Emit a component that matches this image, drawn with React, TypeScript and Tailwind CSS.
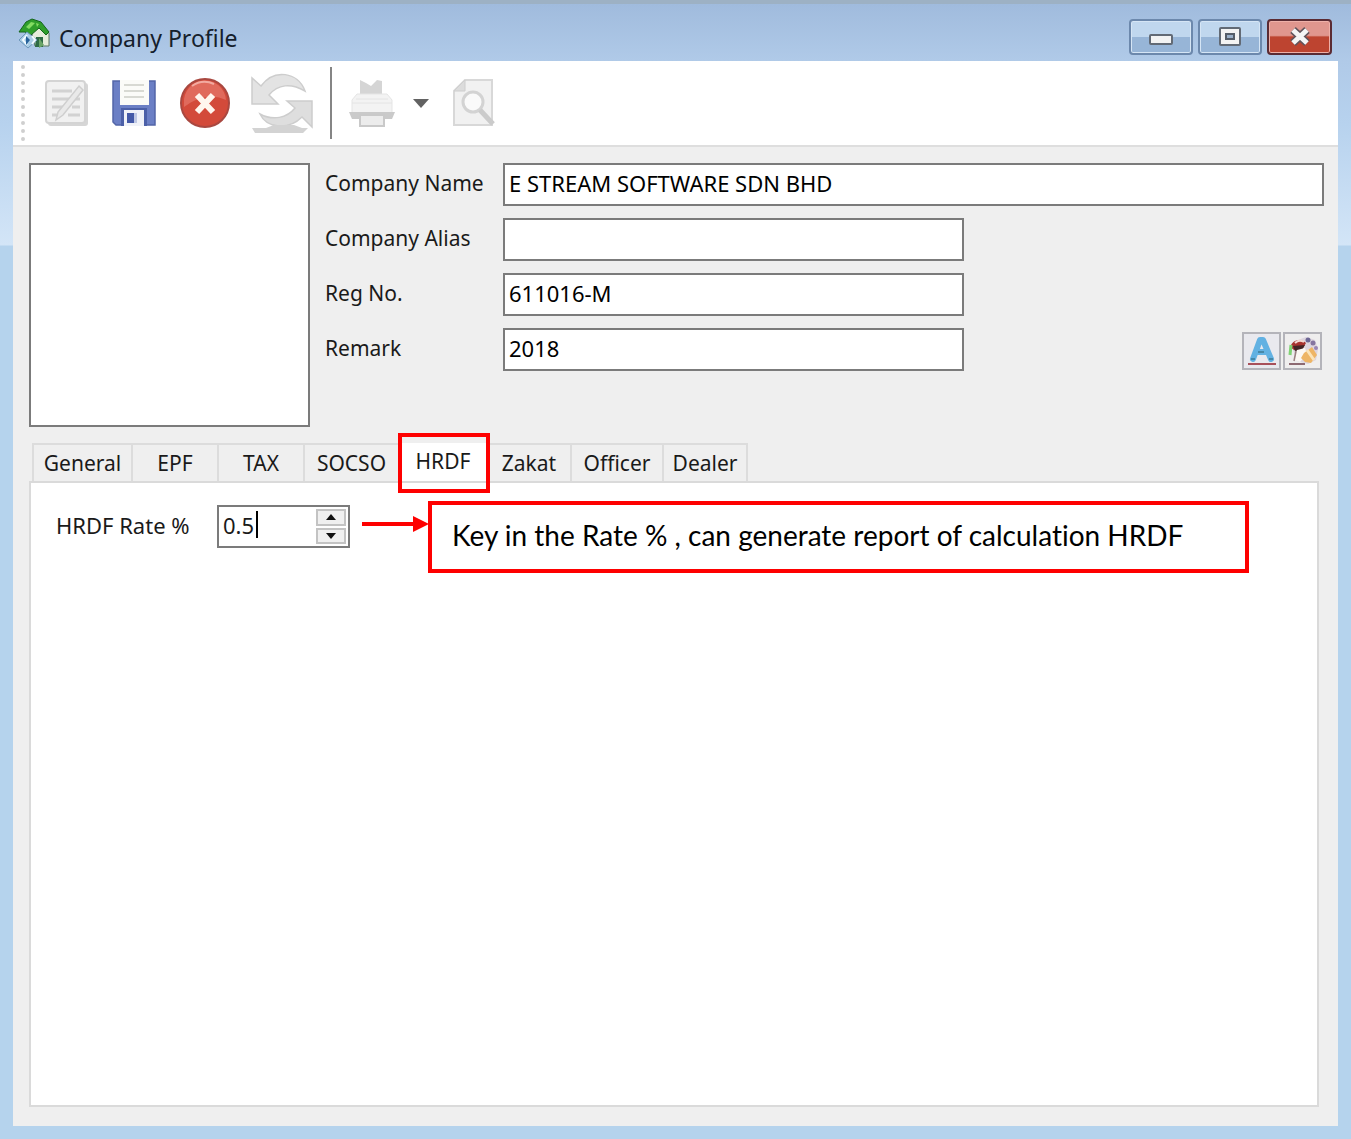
import { useState } from "react";

const tabs = [
  { name: "General", width: "w-[101px]" },
  { name: "EPF", width: "w-[86px]" },
  { name: "TAX", width: "w-[86px]" },
  { name: "SOCSO", width: "w-[95px]" },
  { name: "HRDF", width: "w-[88px]" },
  { name: "Zakat", width: "w-[84px]" },
  { name: "Officer", width: "w-[92px]" },
  { name: "Dealer", width: "w-[84px]" },
];

function AppIcon() {
  return (
    <svg width="34" height="34" viewBox="0 0 34 34" aria-hidden="true">
      <path d="M14 12 23 5l9 10v13H18z" fill="#e6eddc" stroke="#5b7563" />
      <path d="M2 14 9 4l6-3 9 3 8 10-3 3-7-7-8 7-6-3z" fill="#2f9e2b" stroke="#14651c" />
      <path d="m9 9 5-5 4 1-6 6zM19 5l3 1-2 3z" fill="#83dc62" />
      <path d="M19 19h7v10h-8z" fill="#2e6b45" />
      <path d="m22 20 5 7-5 3z" fill="#6aa568" />
      <path d="m2 22 8-8 10 8-9 8z" fill="#a9cde6" stroke="#6d98ba" />
      <path d="m10 17-4 5 4 5M15 18l3 4-3 4" fill="none" stroke="#f3fbff" strokeWidth="2" />
      <path d="m9 18 4 4-4 5z" fill="#27629a" />
    </svg>
  );
}

function EditIcon() {
  return (
    <svg width="46" height="48" viewBox="0 0 46 48" aria-hidden="true">
      <rect x="4" y="4" width="40" height="43" rx="3" fill="#d6d6d6" />
      <rect x="2" y="2" width="39" height="42" rx="3" fill="#f1f1f1" stroke="#d4d4d4" strokeWidth="2" />
      <path d="M8 12h20M8 20h18M8 28h16M8 36h6M24 36h12M28 28h8M31 20h5" stroke="#d2d2d2" strokeWidth="3" />
      <path d="m35 7 4 4-20 25-7 5 2-8z" fill="#e9e9e9" stroke="#cfcfcf" strokeWidth="1.5" />
    </svg>
  );
}

function SaveIcon() {
  return (
    <svg width="44" height="48" viewBox="0 0 44 48" aria-hidden="true">
      <path d="M1 2h42v44H4l-3-3z" fill="#6b7fc5" stroke="#5366a8" strokeWidth="1.5" />
      <path d="M8 1h29v25H8z" fill="#fbfbf8" />
      <path d="M12 6h20M12 12h20M12 18h20" stroke="#d8d9d3" strokeWidth="2" />
      <path d="M9 29h26v18H9z" fill="#4c60a8" />
      <path d="M12 31h20v16H12z" fill="#f0f2f8" />
      <path d="M15 34h7v10h-7z" fill="#4459a7" />
      <path d="M22 34h3v10h-3z" fill="#bfc8e4" />
    </svg>
  );
}

function CancelIcon() {
  return (
    <svg width="50" height="50" viewBox="0 0 50 50" aria-hidden="true">
      <circle cx="25" cy="25" r="24" fill="#d34a3a" stroke="#a94840" strokeWidth="2" />
      <path d="M4 25a21 21 0 0 1 42-3C34 16 18 18 4 29z" fill="#e06a5c" />
      <path d="M12 8a22 22 0 0 1 22-2" stroke="#f2aaa0" strokeWidth="2" fill="none" />
      <path d="m17 17 16 17M33 17 17 34" stroke="#fff6ee" strokeWidth="6" />
    </svg>
  );
}

function RefreshIcon() {
  return (
    <svg width="64" height="62" viewBox="0 0 64 62" aria-hidden="true">
      <path d="M2 6v26h26l-9-9c9-11 22-12 36-4C48 0 24-4 11 14z" fill="#e3e3e3" stroke="#cdcdcd" strokeWidth="1.5" />
      <path d="M62 55V29H37l8 7c-8 10-22 13-35 6 7 15 29 16 42 3z" fill="#dedede" stroke="#cdcdcd" strokeWidth="1.5" />
      <path d="M2 56h14l8-3h20l8 3h6l-5 5H5z" fill="#d3d3d3" />
    </svg>
  );
}

function PrinterIcon() {
  return (
    <svg width="48" height="48" viewBox="0 0 48 48" aria-hidden="true">
      <path d="M12 1l6 3 5 3 6-6 5 1v15H12z" fill="#d5d5d5" />
      <path d="M9 15h30l5 6v13H4V21z" fill="#f3f3f3" stroke="#e5e5e5" />
      <path d="M4 24h40M8 20h32" stroke="#e4e4e4" />
      <path d="M1 33h46l-3 7H4z" fill="#cacaca" />
      <path d="M12 36h24v11H12z" fill="#ececec" stroke="#c9c9c9" strokeWidth="2" />
    </svg>
  );
}

function PreviewIcon() {
  return (
    <svg width="42" height="48" viewBox="0 0 42 48" aria-hidden="true">
      <path d="M12 1h27v45H1V12z" fill="#f1f1f1" stroke="#d8d8d8" strokeWidth="2" />
      <path d="M12 1v11H1z" fill="#dcdcdc" stroke="#cecece" />
      <circle cx="20" cy="23" r="10" fill="#fafafa" stroke="#d3d3d3" strokeWidth="3" />
      <path d="m27 31 13 14" stroke="#cbcbcb" strokeWidth="5" />
    </svg>
  );
}

function FontIcon() {
  return (
    <svg width="35" height="34" viewBox="0 0 35 34" aria-hidden="true">
      <path d="M9 25 16 6h3l8 19M12 18h12" fill="none" stroke="#62b1e2" strokeWidth="6" strokeLinecap="round" strokeLinejoin="round" />
      <path d="M7 25h4M25 25h4M14 18h6" stroke="#4788a8" strokeWidth="2" />
      <path d="M4 30h28" stroke="#a8505a" strokeWidth="2" />
    </svg>
  );
}

function PaintIcon() {
  return (
    <svg width="35" height="34" viewBox="0 0 35 34" aria-hidden="true">
      <path d="M13 6 21 3l9 3 3 9-2 11-8 4-11-3-4-11z" fill="#ddd5de" />
      <path d="M5 13C8 5 16 4 21 9l-3 5-9 2z" fill="#a8322e" />
      <path d="m8 12 12-1-3 5-7 1z" fill="#432424" />
      <path d="M10 9c3-3 6-3 9-1" stroke="#f3d9d3" strokeWidth="2" fill="none" />
      <path d="m12 16 8-2 2 6-7 8-5-2z" fill="#fbf7f3" />
      <path d="m11 17-2 10" stroke="#9a8080" strokeWidth="1.5" />
      <path d="m19 19 8-6 5 8-6 8-6-1-4-4z" fill="#eeb565" />
      <path d="m22 16 7 10" stroke="#fbe4b9" strokeWidth="3" />
      <circle cx="23" cy="6" r="2.5" fill="#6d6694" />
      <circle cx="28" cy="9" r="2.5" fill="#8575a0" />
      <circle cx="31" cy="14" r="2" fill="#9a86b4" />
      <path d="m6 11-1 10" stroke="#7fd373" strokeWidth="3" />
      <path d="M4 30h16" stroke="#8d6a72" strokeWidth="2" />
    </svg>
  );
}

const toolButton = "flex shrink-0 items-center justify-center";
const winButton =
  "flex h-9 w-16 items-center justify-center rounded border-2 border-[#6c88ac] bg-linear-to-b from-[#c0d7ee] from-50% to-[#97b5d7] to-50% shadow-[inset_0_0_0_1px_#d5e5f5]";
const field =
  "h-[43px] rounded-none border-2 border-[#7b7b7b] bg-white px-1 pb-1 text-[22px] leading-7 text-black outline-none";

function Field({ id, label, value, wide }: { id: string; label: string; value: string; wide?: boolean }) {
  return (
    <div className="flex items-start">
      <label htmlFor={id} className="w-[178px] shrink-0 pt-1.5 text-[21px] leading-7">
        {label}
      </label>
      <input id={id} defaultValue={value} className={`${field} ${wide ? "min-w-0 flex-1" : "w-[461px]"}`} />
    </div>
  );
}

export default function App() {
  const [active, setActive] = useState("HRDF");
  const [rate, setRate] = useState("0.5");
  const step = (d: number) => setRate(String(Math.max(0, (parseFloat(rate) || 0) + d)));

  return (
    <div className="flex min-h-screen flex-col border-t-4 border-[#9db1c4] bg-[linear-gradient(to_bottom,#a0bbdd_0,#b0cae8_57px,#b7d2ee_120px,#d3e5f7_241px,#b5d3ed_242px)] pr-[13px] pb-[13px] pl-[13px] font-['Noto_Sans',sans-serif] text-[22px] text-[#1a1a1a]">
      <header className="flex h-[57px] shrink-0 items-start justify-between pr-1.5 pl-1">
        <div className="flex items-start gap-2 pt-3.5">
          <AppIcon />
          <h1 className="pt-1 text-[23px] leading-8 text-[#15202c]">Company Profile</h1>
        </div>
        <div className="flex gap-[5px] pt-[15px]">
          <button type="button" aria-label="Minimize" className={winButton}>
            <svg width="24" height="16" viewBox="0 0 24 16" aria-hidden="true">
              <rect x="1" y="6" width="22" height="9" rx="1" fill="#f3f3f3" stroke="#626a75" strokeWidth="2" />
            </svg>
          </button>
          <button type="button" aria-label="Maximize" className={winButton}>
            <svg width="24" height="20" viewBox="0 0 24 20" aria-hidden="true">
              <rect x="2" y="1" width="20" height="17" rx="1" fill="#f3f3f3" stroke="#626a75" strokeWidth="2" />
              <rect x="8" y="7" width="8" height="5" fill="#9aafc8" stroke="#555d68" strokeWidth="2" />
            </svg>
          </button>
          <button
            type="button"
            aria-label="Close"
            className="flex h-9 w-[65px] items-center justify-center rounded border-2 border-[#5b2b33] bg-linear-to-b from-[#e0968e] from-45% to-[#bd4430] to-50% shadow-[inset_0_0_0_1px_#eeb0a8]"
          >
            <svg width="26" height="20" viewBox="0 0 26 20" aria-hidden="true">
              <path d="m6 3 14 13M20 3 6 16" stroke="#61545b" strokeWidth="8" />
              <path d="m6 3 14 13M20 3 6 16" stroke="#f5f5f5" strokeWidth="5" />
            </svg>
          </button>
        </div>
      </header>

      <main className="flex flex-1 flex-col bg-[#efefef]">
        <div className="flex h-[86px] shrink-0 items-center border-b-2 border-[#dedede] bg-white pl-2">
          <div className="h-[76px] w-1 border-l-4 border-dotted border-[#cfcfcf]" />
          <button type="button" aria-label="Edit" className={`${toolButton} ml-[19px]`}><EditIcon /></button>
          <button type="button" aria-label="Save" className={`${toolButton} ml-[22px]`}><SaveIcon /></button>
          <button type="button" aria-label="Cancel" className={`${toolButton} ml-6`}><CancelIcon /></button>
          <button type="button" aria-label="Refresh" className={`${toolButton} ml-5`}><RefreshIcon /></button>
          <div className="ml-4 h-[72px] w-0.5 bg-[#858585]" />
          <button type="button" aria-label="Print" className={`${toolButton} ml-4`}><PrinterIcon /></button>
          <button type="button" aria-label="Print options" className={`${toolButton} ml-[17px]`}>
            <svg width="16" height="9" viewBox="0 0 16 9" aria-hidden="true"><path d="M0 0h16L8 9z" fill="#626262" /></svg>
          </button>
          <button type="button" aria-label="Preview" className={`${toolButton} ml-6`}><PreviewIcon /></button>
        </div>

        <section className="flex pt-4 pr-[14px] pl-4">
          <div className="h-[264px] w-[281px] shrink-0 border-2 border-[#7b7b7b] bg-white" />
          <div className="ml-[15px] flex min-w-0 flex-1 flex-col gap-3">
            <Field id="name" label="Company Name" value="E STREAM SOFTWARE SDN BHD" wide />
            <Field id="alias" label="Company Alias" value="" />
            <Field id="reg" label="Reg No." value="611016-M" />
            <div className="flex items-start justify-between">
              <Field id="remark" label="Remark" value="2018" />
              <div className="flex gap-0.5 pt-1 pr-0.5">
                <button type="button" aria-label="Font" className="h-[38px] w-[39px] border-2 border-[#b4b4ba] bg-[#e9e9ee]"><FontIcon /></button>
                <button type="button" aria-label="Colours" className="h-[38px] w-[39px] border-2 border-[#b4b4ba] bg-[#efeeee]"><PaintIcon /></button>
              </div>
            </div>
          </div>
        </section>

        <section className="flex flex-1 flex-col pt-4 pr-[19px] pb-[19px] pl-4">
          <div role="tablist" className="flex h-[38px] shrink-0 pl-[3px]">
            {tabs.map((t) => (
              <button
                key={t.name}
                type="button"
                role="tab"
                aria-selected={active === t.name}
                onClick={() => setActive(t.name)}
                className={`relative shrink-0 border-t-2 border-r-2 text-[21px] leading-8 first:border-l-2 ${t.width} ${
                  active === t.name ? "border-white bg-white pb-2" : "border-[#dcdcdc]"
                }`}
              >
                {t.name}
                {t.name === "HRDF" && (
                  <span className="pointer-events-none absolute -top-3 -right-1 -bottom-3 -left-0.5 z-10 border-4 border-[#fe0000]" />
                )}
              </button>
            ))}
          </div>
          <div role="tabpanel" className="flex-1 border-2 border-[#dadada] bg-white pt-[18px] pr-[68px] pl-[25px]">
            <div className="flex items-start">
              <label htmlFor="rate" className="w-[161px] shrink-0 pt-2.5 leading-7">HRDF Rate %</label>
              <div className="relative mt-1 flex h-[43px] w-[133px] shrink-0 border-2 border-[#7b7b7b] bg-white">
                <input
                  id="rate"
                  value={rate}
                  onChange={(e) => setRate(e.target.value)}
                  className="min-w-0 flex-1 pb-0.5 pl-1 text-[22px] outline-none"
                />
                <span className="absolute top-1 left-[37px] h-[27px] w-0.5 bg-black" />
                <div className="flex w-8 flex-col gap-0.5 py-0.5 pr-0.5">
                  <button type="button" aria-label="Increase" onClick={() => step(0.5)} className="flex flex-1 items-center justify-center border-2 border-[#c3c3c3] bg-[#f0f0f0]">
                    <svg width="10" height="6" viewBox="0 0 10 6" aria-hidden="true"><path d="M0 6h10L5 0z" fill="#111" /></svg>
                  </button>
                  <button type="button" aria-label="Decrease" onClick={() => step(-0.5)} className="flex flex-1 items-center justify-center border-2 border-[#c3c3c3] bg-[#f0f0f0]">
                    <svg width="10" height="6" viewBox="0 0 10 6" aria-hidden="true"><path d="M0 0h10L5 6z" fill="#111" /></svg>
                  </button>
                </div>
              </div>
              <svg className="mt-3.5 ml-3 shrink-0" width="66" height="18" viewBox="0 0 66 18" aria-hidden="true">
                <path d="M0 9h54" stroke="#fe0000" strokeWidth="4" />
                <path d="M51 1l16 8-16 8z" fill="#fe0000" />
              </svg>
              <p className="min-w-0 flex-1 border-4 border-[#fe0000] px-5 pt-3.5 pb-[18px] font-['Lato',sans-serif] text-[28px] leading-8 text-black [font-variant-ligatures:none]">
                Key in the Rate % , can generate report of calculation HRDF
              </p>
            </div>
          </div>
        </section>
      </main>
    </div>
  );
}
